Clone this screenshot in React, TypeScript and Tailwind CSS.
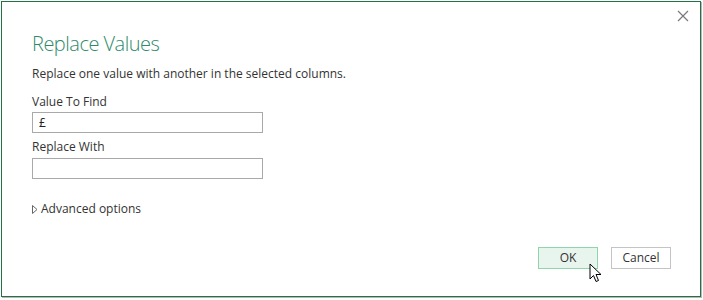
export default function App() {
  return (
    <div className="w-[703px] h-[300px] bg-white relative overflow-hidden" style={{fontFamily: '"Open Sans", "Noto Sans", sans-serif'}}>
      {/* dialog frame */}
      <div className="absolute left-[1px] top-[1px] w-[700px] h-[296px] border border-[#217346] bg-white shadow-[1px_1px_0_#b8b8b8]">
        <button className="absolute right-[10px] top-[7px] w-[14px] h-[14px]" aria-label="Close">
          <svg viewBox="0 0 14 14" width="14" height="14">
            <path d="M2 2 L12 12 M12 2 L2 12" stroke="#7a7a7a" strokeWidth="1.2" fill="none" />
          </svg>
        </button>

        <div className="pl-[30px] pt-[28px] pr-[30px]">
          <h1 className="text-[20px] font-light leading-[28px] tracking-[-0.5px] text-[#2f8a6a]">Replace Values</h1>
          <p className="mt-[8px] text-[12px] leading-[16px] text-[#333]">Replace one value with another in the selected columns.</p>

          <label className="block mt-[12px] text-[12px] leading-[16px] text-[#333]">Value To Find</label>
          <div className="mt-[2px] w-[231px] h-[21px] border border-[#a9a9a9] px-[6px] text-[12px] leading-[19px] text-[#222]">£</div>

          <label className="block mt-[6px] text-[12px] leading-[16px] text-[#333]">Replace With</label>
          <div className="mt-[3px] w-[231px] h-[21px] border border-[#a9a9a9]" />

          <div className="mt-[22px] flex items-center gap-[3px] text-[12px] leading-[16px] text-[#333]">
            <svg width="6" height="9" viewBox="0 0 6 9">
              <path d="M0.5 0.5 L5 4.5 L0.5 8.5 Z" fill="none" stroke="#666" strokeWidth="1" />
            </svg>
            <span>Advanced options</span>
          </div>
        </div>

        <div className="absolute left-[536px] top-[245px] flex gap-[13px]">
          <button className="w-[60px] h-[22px] border border-[#90d4ac] bg-[#e8f4ee] text-[12px] text-[#333]">OK</button>
          <button className="w-[60px] h-[22px] border border-[#c4c4c4] bg-white text-[12px] text-[#333]">Cancel</button>
        </div>

        {/* mouse pointer */}
        <svg className="absolute left-[587px] top-[261px]" width="14" height="20" viewBox="0 0 14 20">
          <path d="M1 1 L1 16 L4.5 12.5 L7 18.5 L9.5 17.5 L7 11.5 L12 11.5 Z" fill="#fff" stroke="#000" strokeWidth="1" strokeLinejoin="round" />
        </svg>
      </div>
    </div>
  );
}
